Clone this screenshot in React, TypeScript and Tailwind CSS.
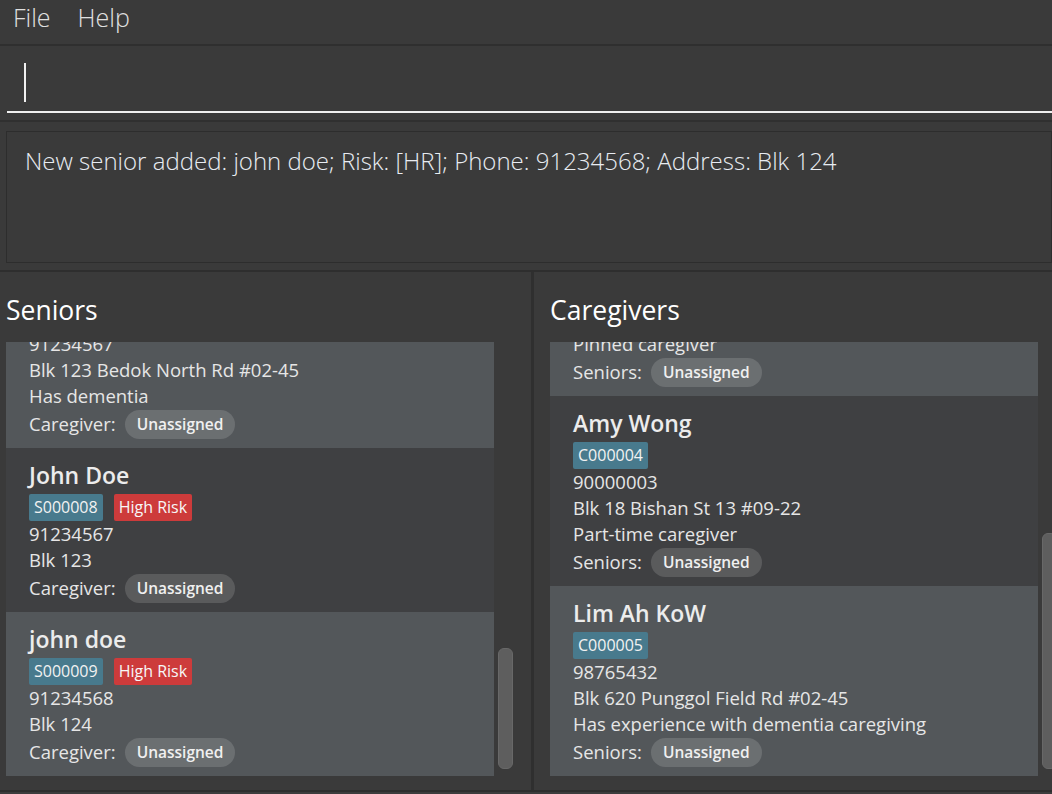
import React from "react"

// one person card in a list
interface Person {
  name: string
  id: string
  highRisk?: boolean
  phone: string
  address: string
  note?: string
  linkLabel: string
}

const seniors: Person[] = [
  { name: "Tan Ah Kow", id: "S000007", highRisk: true, phone: "91234567", address: "Blk 123 Bedok North Rd #02-45", note: "Has dementia", linkLabel: "Caregiver:" },
  { name: "John Doe", id: "S000008", highRisk: true, phone: "91234567", address: "Blk 123", linkLabel: "Caregiver:" },
  { name: "john doe", id: "S000009", highRisk: true, phone: "91234568", address: "Blk 124", linkLabel: "Caregiver:" },
]

const caregivers: Person[] = [
  { name: "Mary Tan", id: "C000003", phone: "90000002", address: "Blk 10 Tampines Ave 1 #01-01", note: "Pinned caregiver", linkLabel: "Seniors:" },
  { name: "Amy Wong", id: "C000004", phone: "90000003", address: "Blk 18 Bishan St 13 #09-22", note: "Part-time caregiver", linkLabel: "Seniors:" },
  { name: "Lim Ah KoW", id: "C000005", phone: "98765432", address: "Blk 620 Punggol Field Rd #02-45", note: "Has experience with dementia caregiving", linkLabel: "Seniors:" },
]

function Card({ p, light }: { p: Person; light: boolean }) {
  return (
    <div className={`${light ? "bg-[#53575a]" : "bg-[#3f4042]"} pl-[23px] pt-[12px] pb-[9px] flex flex-col`}>
      <div className="h-[30px] leading-[30px] text-[23px] font-semibold text-[#ececec]">{p.name}</div>
      <div className="flex gap-[11px] mt-[4px] h-[27px]">
        <span className="bg-[#487a8d] rounded-[2px] px-[5px] leading-[27px] text-[16px] text-[#f2f2f2]">{p.id}</span>
        {p.highRisk && (
          <span className="bg-[#cd3b3b] rounded-[2px] px-[5px] leading-[27px] text-[16px] text-[#f7f7f7]">High Risk</span>
        )}
      </div>
      <div className="h-[26px] leading-[26px]">{p.phone}</div>
      <div className="h-[26px] leading-[26px]">{p.address}</div>
      {p.note && <div className="h-[26px] leading-[26px]">{p.note}</div>}
      <div className="h-[30px] flex items-center gap-[9px]">
        <span>{p.linkLabel}</span>
        <span className="bg-white/[0.14] rounded-full px-[12px] h-[29px] leading-[29px] text-[15.5px] font-semibold text-[#f0f0f0]">
          Unassigned
        </span>
      </div>
    </div>
  )
}

function ListPanel({ title, people, offset, thumb, inset }: { title: string; people: Person[]; offset: string; thumb: string; inset: string }) {
  return (
    <div className={`flex flex-col ${inset}`}>
      <div className="h-[70px] pt-[20px] text-[26.5px] leading-[36px] text-white">{title}</div>
      <div className="flex h-[434px]">
        <div className="w-[488px] shrink-0 overflow-hidden">
          <div className={`flex flex-col ${offset}`}>
            {people.map((p, i) => (
              <Card key={p.id} p={p} light={i % 2 === 0} />
            ))}
          </div>
        </div>
        <div className="w-[15px] shrink-0 ml-[4px] relative">
          <div className={`absolute left-0 right-0 bottom-[7px] rounded-[6px] bg-[#5e5e5e] border border-[#686868] ${thumb}`} />
        </div>
      </div>
    </div>
  )
}

export default function App() {
  return (
    <div className="h-screen w-full bg-[#3a3a3a] text-[#e6e6e6] text-[18.5px] overflow-hidden flex flex-col"
      style={{ fontFamily: '"Open Sans", "Noto Sans", sans-serif' }}>

      {/* menu bar */}
      <div className="h-[46px] shrink-0 flex items-center gap-[27px] pl-[13px] pb-[8px] text-[25px] text-[#e0e0e0] font-light border-b-2 border-[#2f2f2f]">
        <span>File</span>
        <span>Help</span>
      </div>

      {/* command box */}
      <div className="h-[76px] shrink-0 pt-[17px] pl-[7px] border-b-2 border-[#303030]">
        <div className="h-[50px] border-b-2 border-[#f0f0f0] pl-[17px]">
          <div className="w-[2px] h-[39px] bg-[#f0f0f0]" />
        </div>
      </div>

      {/* result display */}
      <div className="h-[150px] shrink-0 pt-[9px] pl-[6px] border-b-2 border-[#2e2e2e]">
        <div className="h-[132px] border border-[#2d2d2d] pl-[18px] pt-[11px] text-[24px] text-[#e8ecf2] font-light">
          New senior added: john doe; Risk: [HR]; Phone: 91234568; Address: Blk 124
        </div>
      </div>

      {/* lists */}
      <div className="flex flex-1 border-b-2 border-[#2e2e2e]">
        <div className="w-[531px] shrink-0">
          <ListPanel title="Seniors" people={seniors} offset="-mt-[84px]" thumb="h-[121px]" inset="pl-[6px]" />
        </div>
        <div className="w-[3px] shrink-0 bg-[#2f2f2f]" />
        <div className="flex-1 min-w-0 overflow-hidden">
          <ListPanel title="Caregivers" people={caregivers} offset="-mt-[136px]" thumb="h-[236px]" inset="pl-[16px]" />
        </div>
      </div>
      <div className="h-[2px] bg-[#3c3c3c]" />
    </div>
  )
}
